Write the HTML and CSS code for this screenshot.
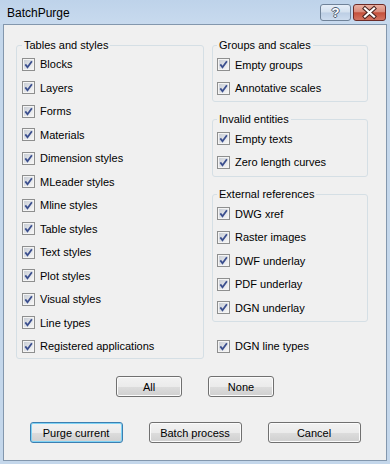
FILE: index.html
```html
<!DOCTYPE html>
<html lang="en">
<head>
    <meta charset="UTF-8">
    <meta name="viewport" content="width=device-width, initial-scale=1.0">
    <title>BatchPurge</title>
    <link rel="stylesheet" href="styles.css">
</head>
<body>

    <!-- Case à cocher réutilisée -->
    <svg class="defs" aria-hidden="true">
        <defs>
            <linearGradient id="cb-fill" x1="0" y1="0" x2="1" y2="1">
                <stop offset="0" stop-color="#c9ced6"/>
                <stop offset="1" stop-color="#f6f6f6"/>
            </linearGradient>
            <symbol id="chk" viewBox="0 0 13 13">
                <rect x="0.5" y="0.5" width="12" height="12" fill="#f4f4f4" stroke="#8e8f8f"/>
                <rect x="2" y="2" width="9" height="9" fill="url(#cb-fill)"/>
                <path d="M3.3 6.4 L5.5 9.2 L9.9 3.3" fill="none" stroke="#3b4f8e" stroke-width="1.8"/>
            </symbol>
        </defs>
    </svg>

    <div class="window">
        <div class="titlebar">
            <span class="title">BatchPurge</span>
            <div class="caption-buttons">
                <span class="cap-btn help">?</span>
                <span class="cap-btn close">
                    <svg width="31" height="15" viewBox="0 0 31 15">
                        <path d="M11 3.5 L20 11.5 M20 3.5 L11 11.5" stroke="#4a2420" stroke-width="4.2" stroke-linecap="square"/>
                        <path d="M11 3.5 L20 11.5 M20 3.5 L11 11.5" stroke="#ffffff" stroke-width="2.2" stroke-linecap="square"/>
                    </svg>
                </span>
            </div>
        </div>

        <div class="client">
            <div class="groups">
                <fieldset class="group tables">
                    <legend>Tables and styles</legend>
                    <label class="check"><svg class="cb"><use href="#chk"/></svg>Blocks</label>
                    <label class="check"><svg class="cb"><use href="#chk"/></svg>Layers</label>
                    <label class="check"><svg class="cb"><use href="#chk"/></svg>Forms</label>
                    <label class="check"><svg class="cb"><use href="#chk"/></svg>Materials</label>
                    <label class="check"><svg class="cb"><use href="#chk"/></svg>Dimension styles</label>
                    <label class="check"><svg class="cb"><use href="#chk"/></svg>MLeader styles</label>
                    <label class="check"><svg class="cb"><use href="#chk"/></svg>Mline styles</label>
                    <label class="check"><svg class="cb"><use href="#chk"/></svg>Table styles</label>
                    <label class="check"><svg class="cb"><use href="#chk"/></svg>Text styles</label>
                    <label class="check"><svg class="cb"><use href="#chk"/></svg>Plot styles</label>
                    <label class="check"><svg class="cb"><use href="#chk"/></svg>Visual styles</label>
                    <label class="check"><svg class="cb"><use href="#chk"/></svg>Line types</label>
                    <label class="check"><svg class="cb"><use href="#chk"/></svg>Registered applications</label>
                </fieldset>

                <div class="side">
                    <fieldset class="group">
                        <legend>Groups and scales</legend>
                        <label class="check"><svg class="cb"><use href="#chk"/></svg>Empty groups</label>
                        <label class="check"><svg class="cb"><use href="#chk"/></svg>Annotative scales</label>
                    </fieldset>

                    <fieldset class="group invalid">
                        <legend>Invalid entities</legend>
                        <label class="check"><svg class="cb"><use href="#chk"/></svg>Empty texts</label>
                        <label class="check"><svg class="cb"><use href="#chk"/></svg>Zero length curves</label>
                    </fieldset>

                    <fieldset class="group xref">
                        <legend>External references</legend>
                        <label class="check"><svg class="cb"><use href="#chk"/></svg>DWG xref</label>
                        <label class="check"><svg class="cb"><use href="#chk"/></svg>Raster images</label>
                        <label class="check"><svg class="cb"><use href="#chk"/></svg>DWF underlay</label>
                        <label class="check"><svg class="cb"><use href="#chk"/></svg>PDF underlay</label>
                        <label class="check"><svg class="cb"><use href="#chk"/></svg>DGN underlay</label>
                    </fieldset>

                    <label class="check linetypes"><svg class="cb"><use href="#chk"/></svg>DGN line types</label>
                </div>
            </div>

            <!-- Sélection -->
            <div class="btn-row select-row">
                <button class="btn small">All</button>
                <button class="btn small">None</button>
            </div>

            <!-- Actions -->
            <div class="btn-row action-row">
                <button class="btn wide default">Purge current</button>
                <button class="btn wide">Batch process</button>
                <button class="btn wide">Cancel</button>
            </div>
        </div>
    </div>

</body>
</html>
```

FILE: styles.css
```css
/* Style général */
body {
    margin: 0;
    font-family: "Liberation Sans", Arial, sans-serif;
    font-size: 11px;
    color: #000;
    background: #fff;
}
.defs {
    display: block;
    width: 0;
    height: 0;
}

/* Fenêtre */
.window {
    width: 390px;
    height: 464px;
    display: flex;
    flex-direction: column;
    background: #c4d7eb;
}
.titlebar {
    height: 24px;
    display: flex;
    padding: 0 4px 0 7px;
    background: linear-gradient(#bed3ea, #c8daee);
}
.title {
    font-size: 12px;
    line-height: 27px;
}
.caption-buttons {
    margin-left: auto;
    margin-top: 4px;
    display: flex;
    gap: 2px;
}
.cap-btn {
    height: 17px;
    box-sizing: border-box;
    border: 1px solid #6f8298;
    border-radius: 3px;
    display: flex;
    align-items: center;
    justify-content: center;
}
.help {
    width: 31px;
    background: linear-gradient(#e6eef8 0%, #d3e0ee 48%, #bccee4 52%, #cddcee 100%);
    color: #fff;
    font-weight: bold;
    font-size: 13px;
    text-shadow: 1px 0 #4c5d72, -1px 0 #4c5d72, 0 1px #4c5d72, 0 -1px #4c5d72;
}
.close {
    width: 33px;
    border-color: #6c2b27;
    background: linear-gradient(#eab1a3 0%, #d98c7c 45%, #c5503b 52%, #d27462 100%);
}

/* Zone cliente */
.client {
    flex: 1;
    margin: 0 3px 3px;
    border: 1px solid #8397ad;
    background: #f0f0f0;
    padding: 14px 12px 0;
}
.groups {
    display: grid;
    grid-template-columns: 188px 156px;
    column-gap: 8px;
}

/* Cadres de groupe */
.group {
    margin: 0;
    min-width: 0;
    border: 1px solid #d5dfe5;
    border-radius: 3px;
    padding: 1px 4px 1px 4px;
}
.group legend {
    padding: 0 2px;
    line-height: 13px;
}
.tables {
    padding: 0.5px 4px 0 5px;
}
.side {
    display: flex;
    flex-direction: column;
    padding-bottom: 1px;
}
.invalid {
    margin-top: 11px;
    padding-bottom: 2px;
}
.xref {
    margin-top: 11px;
}

/* Cases à cocher */
.check {
    display: flex;
    align-items: center;
    gap: 5px;
    height: 23.5px;
    white-space: nowrap;
}
.cb {
    width: 13px;
    height: 13px;
    flex-shrink: 0;
}
.linetypes {
    margin-top: auto;
    padding-left: 5px;
}

/* Boutons */
.btn-row {
    display: flex;
    justify-content: center;
    gap: 26px;
}
.select-row {
    margin-top: 17px;
}
.action-row {
    margin-top: 25px;
}
.btn {
    height: 21px;
    padding: 0;
    font-family: inherit;
    font-size: 11px;
    color: #000;
    border: 1px solid #707070;
    border-radius: 3px;
    background: linear-gradient(#f2f2f2 0%, #ebebeb 50%, #dddddd 50%, #cfcfcf 100%);
    box-shadow: inset 0 0 0 1px #fbfbfb;
}
.small { width: 66px; }
.wide { width: 93px; }
.default {
    border-color: #3c7fb1;
    box-shadow: inset 0 0 0 1px #7fd3f5;
}
```
